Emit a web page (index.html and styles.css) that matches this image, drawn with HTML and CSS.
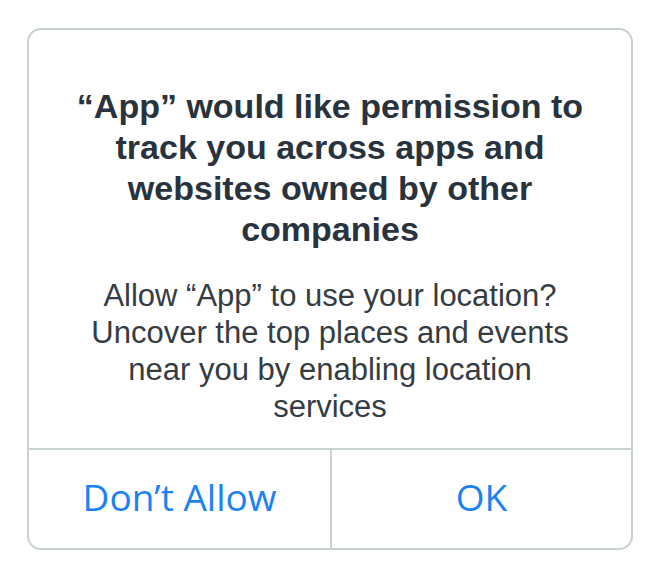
FILE: index.html
```html
<!DOCTYPE html>
<html>
<head>
<meta charset="utf-8">
<link rel="stylesheet" href="styles.css">
</head>
<body>
<div class="dialog">
  <div class="content">
    <h1 class="title">“App” would like permission to<br>track you across apps and<br>websites owned by other<br>companies</h1>
    <p class="message">Allow “App” to use your location?<br>Uncover the top places and events<br>near you by enabling location<br>services</p>
  </div>
  <div class="actions">
    <button class="action">Don’t Allow</button>
    <button class="action">OK</button>
  </div>
</div>
</body>
</html>
```
FILE: styles.css
```css
html, body {
  margin: 0;
  padding: 0;
  background: #ffffff;
}
body {
  padding: 28px 0 0 27px;
}
.dialog {
  width: 602px;
  border: 2px solid #c9d3d3;
  border-radius: 14px;
  background: #fff;
  overflow: hidden;
}
.content {
  padding: 56px 10px 23px;
  text-align: center;
}
.title {
  margin: 0;
  font-family: "Liberation Sans", Arial, sans-serif;
  font-weight: bold;
  font-size: 34px;
  line-height: 41px;
  color: #28333d;
}
.message {
  margin: 27px 0 0;
  font-family: "Liberation Sans", Arial, sans-serif;
  font-size: 31px;
  line-height: 37px;
  color: #343c44;
}
.actions {
  display: grid;
  grid-template-columns: 1fr 1fr;
  border-top: 2px solid #c9d3d3;
}
.action {
  height: 98px;
  border: 0;
  background: transparent;
  font-family: "Open Sans", sans-serif;
  font-size: 37px;
  color: #1a82f5;
  padding: 0 0 6px;
}
.action + .action {
  border-left: 2px solid #c9d3d3;
}
```
